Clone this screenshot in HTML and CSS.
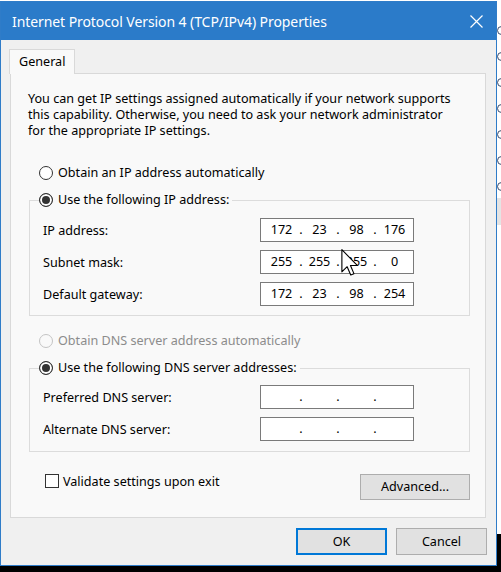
FILE: index.html
```html
<!DOCTYPE html>
<html>
<head>
<meta charset="utf-8">
<title>Internet Protocol Version 4 (TCP/IPv4) Properties</title>
<link rel="stylesheet" href="styles.css">
</head>
<body>
<div class="top-strip"></div>
<div class="main">
  <div class="dialog">
    <div class="titlebar">
      <span class="title">Internet Protocol Version 4 (TCP/IPv4) Properties</span>
      <svg class="close" width="13" height="13" viewBox="0 0 13 13"><path d="M0.5 0.5 L12.5 12.5 M12.5 0.5 L0.5 12.5" stroke="#fff" stroke-width="1.2" fill="none"/></svg>
    </div>
    <div class="content">
      <div class="tabs"><div class="tab">General</div></div>
      <div class="panel">
        <p class="intro">You can get IP settings assigned automatically if your network supports<br>this capability. Otherwise, you need to ask your network administrator<br>for the appropriate IP settings.</p>
        <div class="radio-row r-auto"><span class="radio"></span><span>Obtain an IP address automatically</span></div>
        <fieldset class="group g1">
          <legend><span class="radio-row"><span class="radio checked"></span><span>Use the following IP address:</span></span></legend>
          <div class="rows">
            <div class="field-row"><span class="label">IP address:</span><div class="ip"><span>172</span><i>.</i><span>23</span><i>.</i><span>98</span><i>.</i><span>176</span></div></div>
            <div class="field-row"><span class="label">Subnet mask:</span><div class="ip"><span>255</span><i>.</i><span>255</span><i>.</i><span>255</span><i>.</i><span>0</span></div></div>
            <div class="field-row"><span class="label">Default gateway:</span><div class="ip"><span>172</span><i>.</i><span>23</span><i>.</i><span>98</span><i>.</i><span>254</span></div></div>
          </div>
        </fieldset>
        <div class="radio-row r-dns disabled"><span class="radio"></span><span>Obtain DNS server address automatically</span></div>
        <fieldset class="group g2">
          <legend><span class="radio-row"><span class="radio checked"></span><span>Use the following DNS server addresses:</span></span></legend>
          <div class="rows">
            <div class="field-row"><span class="label">Preferred DNS server:</span><div class="ip"><span></span><i>.</i><span></span><i>.</i><span></span><i>.</i><span></span></div></div>
            <div class="field-row"><span class="label">Alternate DNS server:</span><div class="ip"><span></span><i>.</i><span></span><i>.</i><span></span><i>.</i><span></span></div></div>
          </div>
        </fieldset>
        <div class="bottom-row">
          <div class="check-row"><span class="checkbox"></span><span>Validate settings upon exit</span></div>
          <button class="btn advanced">Advanced...</button>
        </div>
      </div>
      <div class="buttons">
        <button class="btn default">OK</button>
        <button class="btn">Cancel</button>
      </div>
    </div>
  </div>
  <div class="side">
    <div class="side-list">
      <span class="ring"></span><span class="ring"></span><span class="ring"></span><span class="ring"></span><span class="ring"></span><span class="ring"></span><span class="ring"></span>
    </div>
    <div class="side-block"></div>
    <div class="side-fill"></div>
    <div class="side-dark"></div>
  </div>
</div>
<svg class="cursor" width="17" height="27" viewBox="0 0 12 19.5"><path d="M0.5 0.5 L0.5 16.5 L4.3 12.8 L6.9 18.8 L9.2 17.8 L6.7 11.9 L11.6 11.9 Z" fill="#fff" stroke="#000" stroke-width="0.8" stroke-linejoin="round"/></svg>
</body>
</html>
```
FILE: styles.css
```css
* { box-sizing: border-box; }

body {
  margin: 0;
  width: 501px;
  height: 572px;
  overflow: hidden;
  background: #000;
  font-family: "Noto Sans", "Open Sans", sans-serif;
  font-size: 12.6px;
  color: #000;
  position: relative;
}

.top-strip {
  height: 1px;
  background: #fff;
}

.main {
  display: flex;
  height: 565px;
}

.dialog {
  width: 497px;
  height: 565px;
  border: 1px solid #2f7cc8;
  background: #f0f0f0;
  display: flex;
  flex-direction: column;
}

.titlebar {
  height: 38px;
  background: #2b7bc9;
  display: flex;
  align-items: center;
  justify-content: space-between;
  padding: 2px 13px 0 11px;
  color: #fff;
}

.title {
  font-size: 14px;
  letter-spacing: -0.08px;
  line-height: 18px;
  white-space: nowrap;
}

.close { display: block; margin-top: -1px; }

.content {
  flex: 1;
  padding: 9px 10px 10px 9px;
  display: flex;
  flex-direction: column;
}

.tabs {
  height: 24px;
  display: flex;
}

.tab {
  position: relative;
  z-index: 1;
  margin-left: -1px;
  width: 66px;
  height: 25px;
  border: 1px solid #d9d9d9;
  border-bottom: none;
  background: #f9f9f9;
  padding-left: 9px;
  line-height: 23px;
}

.panel {
  height: 445px;
  border: 1px solid #d9d9d9;
  background: #f9f9f9;
  padding: 0 15px 0 18px;
}

.intro {
  margin: 17px 0 0 -1px;
  line-height: 16px;
  white-space: nowrap;
}

.radio-row {
  display: flex;
  align-items: center;
  gap: 5px;
  height: 16px;
  line-height: 16px;
  white-space: nowrap;
}

.r-auto { margin: 26px 0 0 10px; }
.r-dns { margin: 17px 0 0 10px; }

.radio {
  width: 14px;
  height: 14px;
  border: 1px solid #333;
  border-radius: 50%;
  background: #fff;
  flex: none;
}

.radio.checked {
  background: #333;
  box-shadow: inset 0 0 0 2px #fff;
}

.disabled { color: #8c8c8c; }
.disabled .radio { border-color: #c4c4c4; background: #f9f9f9; }

.group {
  margin: 0;
  border: 1px solid #dcdcdc;
  padding: 0 0 0 9px;
  min-width: 0;
}

.group legend {
  padding: 0 3px 0 0;
}

.g1 { margin-top: 11px; }
.g1 .rows { padding: 10px 0 9px 4px; }

.g2 { margin-top: 11px; }
.g2 .rows { padding: 9px 0 10px 4px; }

.rows {
  display: flex;
  flex-direction: column;
  gap: 8px;
}

.field-row {
  display: grid;
  grid-template-columns: 217px 154px;
  align-items: center;
  height: 24px;
}

.ip {
  height: 24px;
  border: 1px solid #7a7a7a;
  background: #fff;
  padding-left: 3px;
  display: grid;
  grid-template-columns: 35px 4px 33px 4px 33px 4px 35px;
  align-items: center;
  text-align: center;
  line-height: 16px;
}

.ip i {
  font-style: normal;
}

.bottom-row {
  display: flex;
  justify-content: space-between;
  align-items: flex-start;
  margin-top: 21px;
}

.check-row {
  display: flex;
  align-items: center;
  gap: 4px;
  height: 16px;
  margin-left: 16px;
  white-space: nowrap;
}

.checkbox {
  width: 14px;
  height: 14px;
  border: 1px solid #333;
  background: #fff;
}

.btn {
  font-family: inherit;
  font-size: 12.6px;
  color: #000;
  background: #e1e1e1;
  border: 1px solid #adadad;
  padding: 0;
  margin: 0;
  line-height: 16px;
}

.advanced {
  width: 110px;
  height: 26px;
  margin-top: 1px;
}

.buttons {
  margin-top: 10px;
  margin-right: -1px;
  display: flex;
  justify-content: flex-end;
  gap: 9px;
}

.buttons .btn {
  width: 91px;
  height: 27px;
}

.btn.default {
  border: 2px solid #0078d7;
}

.side {
  width: 4px;
  display: flex;
  flex-direction: column;
  background: #fff;
  overflow: hidden;
}

.side-list {
  padding-top: 16px;
  display: flex;
  flex-direction: column;
}

.ring {
  height: 26px;
  display: flex;
  align-items: center;
}

.ring::before {
  content: "";
  width: 7px;
  height: 7px;
  flex: none;
  border: 1px solid #3a4a6a;
  border-radius: 50%;
}

.side-block {
  height: 27px;
  margin-top: -1px;
  background: #e4e4e4;
}

.side-fill { flex: 1; }

.side-dark {
  height: 32px;
  background: #000;
}

.cursor {
  position: absolute;
  left: 341px;
  top: 249px;
}
```
